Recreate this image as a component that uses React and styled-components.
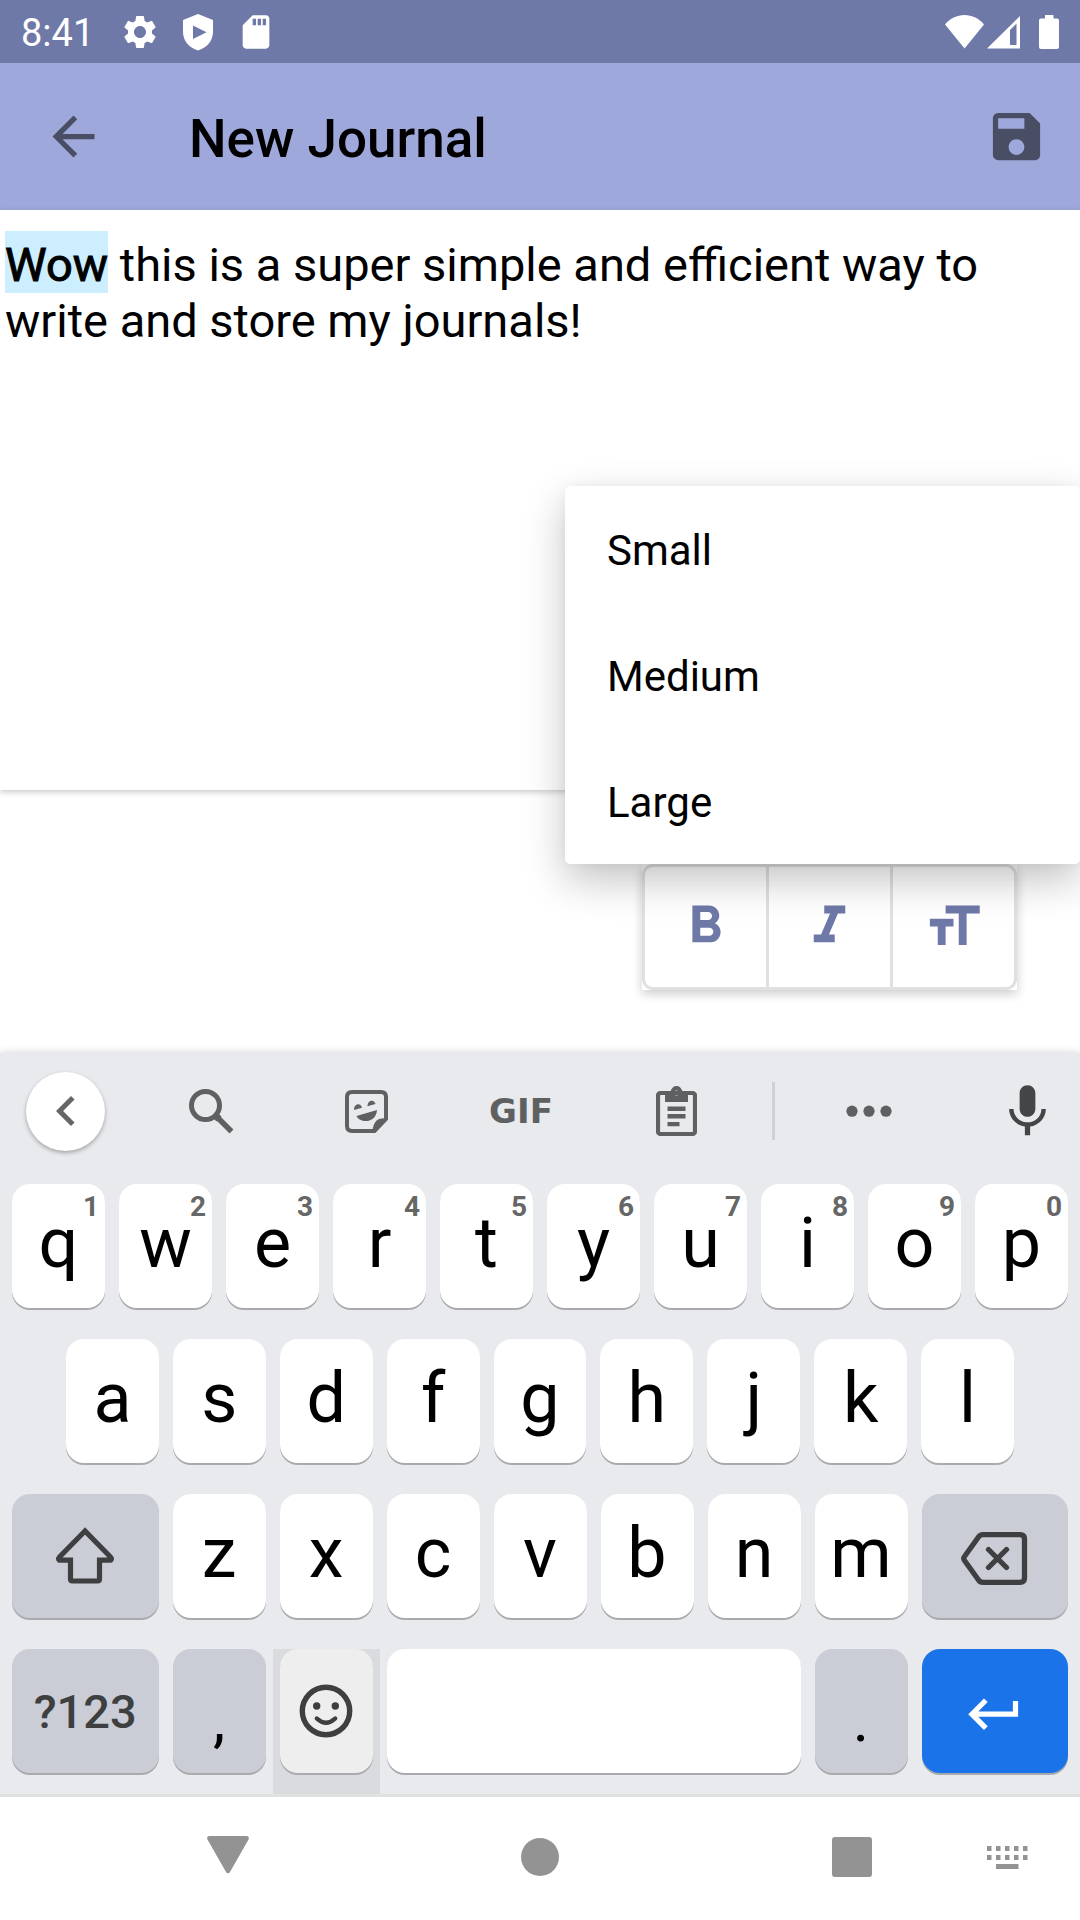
import React from "react";
import styled, { createGlobalStyle } from "styled-components";
import {
  MdArrowBack,
  MdChevronLeft,
  MdFormatBold,
  MdFormatItalic,
  MdFormatSize,
  MdMic,
  MdSave,
  MdSdCard,
  MdSettings,
} from "react-icons/md";

const GlobalStyle = createGlobalStyle`
  *, *::before, *::after { box-sizing: border-box; }
  body { margin: 0; background: #fff; overflow-x: hidden; }
  button {
    margin: 0;
    padding: 0;
    border: 0;
    background: none;
    color: inherit;
    font: inherit;
    cursor: pointer;
  }
  svg { display: block; flex: none; }
`;

const Screen = styled.div`
  display: flex;
  flex-direction: column;
  min-height: 100vh;
  overflow: hidden;
  background: #fff;
  color: #000;
  font-family: Roboto, "Liberation Sans", sans-serif;
`;

/* ---------- Status bar ---------- */

const StatusBar = styled.div`
  display: flex;
  align-items: center;
  justify-content: space-between;
  height: 63px;
  padding: 0 21px;
  background: #6f79a8;
  color: #fff;
`;

const StatusGroup = styled.div`
  display: flex;
  align-items: center;
  gap: ${(p) => p.$gap}px;
`;

const Clock = styled.time`
  margin-right: 8px;
  padding-top: 2px;
  font-size: 38px;
  line-height: 44px;
`;

/* ---------- App bar ---------- */

const AppBar = styled.header`
  display: flex;
  align-items: center;
  height: 147px;
  padding: 0 32px 0 42px;
  background: #9fa8da;
`;

const BarButton = styled.button`
  color: #494e65;
`;

const Title = styled.h1`
  flex: 1;
  margin: 0;
  padding: 4px 0 0 84px;
  font-size: 53px;
  font-weight: 500;
  line-height: 62px;
`;

/* ---------- Editor ---------- */

const Editor = styled.div`
  flex: 1;
  padding: 27px 5px;
  background: #fff;
  box-shadow: 0 2px 6px rgba(0, 0, 0, 0.22);
  font-size: 47px;
  line-height: 56px;
  outline: none;
`;

const Selection = styled.mark`
  padding: 6px 0 1px;
  background: #cceeff;
  color: inherit;
  -webkit-text-stroke: 1px currentColor;
`;

const FormatArea = styled.div`
  display: flex;
  justify-content: flex-end;
  padding: 74px 63px 63px;
`;

const FormatAnchor = styled.div`
  position: relative;
  background: #fff;
  box-shadow: 0 4px 10px rgba(0, 0, 0, 0.2);
`;

const ToggleGroup = styled.div`
  display: flex;
  border: 3px solid #e0e0e0;
  border-radius: 11px;
`;

const Toggle = styled.button`
  display: flex;
  align-items: center;
  justify-content: center;
  width: 121px;
  height: 120px;
  padding-bottom: 2px;
  color: #6f79a8;

  & + & {
    width: 124px;
    border-left: 3px solid #e0e0e0;
  }
`;

const SizeMenu = styled.div`
  position: absolute;
  right: -63px;
  bottom: 100%;
  width: 515px;
  border-radius: 5px;
  background: #fff;
  box-shadow: 0 16px 42px rgba(0, 0, 0, 0.24), 0 0 12px rgba(0, 0, 0, 0.04);
`;

const SizeOption = styled.button`
  display: block;
  width: 100%;
  height: 126px;
  padding: 4px 42px 0;
  font-size: 42px;
  line-height: 50px;
  text-align: left;
`;

/* ---------- Keyboard ---------- */

const Keyboard = styled.section`
  position: relative;
  z-index: 0;
  padding-bottom: 21px;
  border-bottom: 3px solid #e0e2e1;
  background: #e8eaed;
  box-shadow: 0 0 9px rgba(0, 0, 0, 0.18);
`;

const KeyboardTools = styled.div`
  display: flex;
  align-items: center;
  justify-content: space-between;
  height: 116px;
  margin-bottom: 15px;
  padding: 0 21px 0 26px;
  color: #5f6062;
`;

const ToolGroup = styled.div`
  display: flex;
  align-items: center;
`;

const CollapseButton = styled.button`
  display: flex;
  align-items: center;
  justify-content: center;
  width: 79px;
  height: 79px;
  margin-right: 74px;
  border-radius: 50%;
  background: #fff;
  box-shadow: 0 2px 4px rgba(0, 0, 0, 0.3);
  color: #666;
`;

const Tool = styled.button`
  display: flex;
  align-items: center;
  justify-content: center;
  width: 64px;
  height: 64px;
  color: ${(p) => (p.$dark ? "#444547" : "inherit")};

  & + & {
    margin-left: 91px;
  }
`;

const GifLabel = styled.span`
  font-family: "DejaVu Sans", sans-serif;
  font-size: 34px;
  font-weight: 700;
  line-height: 40px;
`;

const Divider = styled.span`
  width: 3px;
  height: 58px;
  margin: 0 62px 0 64px;
  background: #d0d1d4;
`;

const Rows = styled.div`
  display: flex;
  flex-direction: column;
  gap: 31px;
`;

const Row = styled.div`
  display: flex;
  gap: 14px;
  padding: 0 ${(p) => p.$inset || 12}px;
`;

const keyFill = { letter: "#fff", soft: "#cbcdd6", pressed: "#eee", enter: "#1a73e8" };

const Key = styled.button`
  position: relative;
  display: flex;
  align-items: center;
  justify-content: center;
  flex: ${(p) => p.$span || 1} 1 ${(p) => ((p.$span || 1) - 1) * 14}px;
  min-width: 0;
  height: 124px;
  padding-bottom: ${(p) => (p.$kind ? 0 : 6)}px;
  border-radius: 18px;
  background: ${(p) => keyFill[p.$kind || "letter"]};
  box-shadow: 0 2px 0 #a9aaad;
  color: ${(p) => (p.$kind === "enter" ? "#fff" : p.$kind ? "#3e3f41" : "#000")};
  font-size: 70px;
  line-height: 82px;
`;

const PressedKey = styled(Key)`
  &::before {
    content: "";
    position: absolute;
    z-index: -1;
    inset: 0 -7px -21px;
    background: #dadbdf;
  }
`;

const PunctuationKey = styled(Key)`
  padding-top: 18px;
  color: #000;
  font-size: 62px;
`;

const SymbolsKey = styled(Key)`
  padding-top: 2px;
  font-size: 47px;
  font-weight: 500;
`;

const Hint = styled.span`
  position: absolute;
  top: 6px;
  right: 6px;
  color: #666;
  font-size: 28px;
  font-weight: 700;
  line-height: 34px;
`;

/* ---------- Navigation bar ---------- */

const NavBar = styled.nav`
  position: relative;
  z-index: 1;
  display: flex;
  justify-content: space-between;
  height: 123px;
  padding-left: 150px;
  background: #fff;
  color: #939393;
`;

const NavButton = styled.button`
  display: flex;
  align-items: center;
  justify-content: center;
  width: 156px;
  padding-bottom: 3px;
`;

const NavPair = styled.div`
  display: flex;
`;

const ImeButton = styled(NavButton)`
  width: 150px;
`;

/* ---------- Drawings ---------- */

const ShieldPlayIcon = () => (
  <svg width="40" height="40" viewBox="0 0 40 40" fill="currentColor">
    <path
      fillRule="evenodd"
      d="M20 2 35 8V20C35 29 28.500 36 20 38.500C11.500 36 5 29 5 20V8ZM15 13.500V27L28.500 20.200Z"
    />
  </svg>
);

const WifiIcon = () => (
  <svg width="39" height="34" viewBox="0 0 39 34" fill="currentColor">
    <path d="M0 9.500C5 3.500 12 0 19.500 0S34 3.500 39 9.500L19.500 33.500Z" />
  </svg>
);

const SignalIcon = () => (
  <svg width="33" height="34" viewBox="0 0 33 34" fill="currentColor">
    <path fillRule="evenodd" d="M33 1V33.500H0ZM29.500 8.500 23 15V30H29.500Z" />
  </svg>
);

const BatteryIcon = () => (
  <svg width="20" height="34" viewBox="0 0 20 34" fill="currentColor">
    <path d="M6 0h8.500v3.500H18a2 2 0 0 1 2 2V32a2 2 0 0 1-2 2H2a2 2 0 0 1-2-2V5.500a2 2 0 0 1 2-2h4z" />
  </svg>
);

const SearchIcon = () => (
  <svg width="46" height="46" viewBox="0 0 46 46" fill="none" stroke="currentColor" strokeWidth="5">
    <circle cx="17.500" cy="17.500" r="14" />
    <path d="M28 28 43.500 43.500" strokeWidth="5.500" />
    <path d="M27 27 31 31" strokeWidth="7" />
  </svg>
);

const StickerIcon = () => (
  <svg width="43" height="43" viewBox="0 0 43 43" fill="currentColor">
    <path
      fill="none"
      stroke="currentColor"
      strokeWidth="4"
      d="M7 2H36Q41 2 41 7V29L29.500 41H7Q2 41 2 36V7Q2 2 7 2Z"
    />
    <path d="M41 28.500V31L31 41H27.500C28 33 32 28.500 37 28.500Z" />
    <path d="M9 20c-.3-6 6.500-8 8-2.200z" />
    <path d="M22.500 16.300c-.3-6 6.500-8 8-2.200z" />
    <path d="M11.500 26 32 20C31 33.500 15 33.500 11.500 26Z" />
  </svg>
);

const ClipboardIcon = () => (
  <svg width="41" height="50" viewBox="0 0 41 50" fill="currentColor">
    <rect x="2" y="7" width="37" height="41" rx="2.500" fill="none" stroke="currentColor" strokeWidth="4.200" />
    <path
      fillRule="evenodd"
      d="M9 5.500h5.500C15.500 2 17.500 0 20.500 0S25.500 2 26.500 5.500H32v10.500H9ZM20.500 4.500a2.500 2.500 0 1 0 0 5a2.500 2.500 0 1 0 0-5Z"
    />
    <path d="M11.500 20.500H29.500V25H11.500ZM11.500 28H29.500V32.500H11.500ZM11.500 36H23.500V40.300H11.500Z" />
  </svg>
);

const DotsIcon = () => (
  <svg width="46" height="12" viewBox="0 0 46 12" fill="currentColor">
    <circle cx="6" cy="6.200" r="5.600" />
    <circle cx="23" cy="6.200" r="5.600" />
    <circle cx="40" cy="6.200" r="5.600" />
  </svg>
);

const ShiftIcon = () => (
  <svg width="60" height="60" viewBox="0 0 60 60" fill="none" stroke="currentColor" strokeWidth="5.200">
    <path d="M30 5 4.500 31C3 32.500 3.500 34.200 5.500 34.200H15.500V53q0 2 2 2h25q2 0 2-2V34.200H54.500C56.500 34.200 57 32.500 55.500 31Z" />
  </svg>
);

const BackspaceIcon = () => (
  <svg
    width="72"
    height="60"
    viewBox="0 0 72 60"
    fill="none"
    stroke="currentColor"
    strokeWidth="5.300"
    strokeLinejoin="round"
    strokeLinecap="round"
  >
    <path d="M24 8.700H61Q65.500 8.700 65.500 13V52Q65.500 56.300 61 56.300H24Q21 56.300 19.500 54L5.500 34.500Q4 32.500 5.500 30.500L19.500 11Q21 8.700 24 8.700Z" />
    <path d="M29.500 23.500 47.500 41.500M47.500 23.500 29.500 41.500" />
  </svg>
);

const SmileyIcon = () => (
  <svg width="54" height="54" viewBox="0 0 54 54" fill="none" stroke="currentColor">
    <circle cx="27" cy="27" r="23.700" strokeWidth="5.400" />
    <circle cx="17.700" cy="22" r="3.700" fill="currentColor" stroke="none" />
    <circle cx="36.300" cy="22" r="3.700" fill="currentColor" stroke="none" />
    <path d="M17.800 34.500Q27 43 36.200 34.500" strokeWidth="4.400" strokeLinecap="round" />
  </svg>
);

const EnterIcon = () => (
  <svg width="63" height="63" viewBox="0 -1 24 24" fill="currentColor">
    <path d="M19 7v4H5.830l3.580-3.590L8 6l-6 6 6 6 1.410-1.410L5.830 13H21V7z" />
  </svg>
);

const BackTriangleIcon = () => (
  <svg width="42" height="44" viewBox="0 0 42 44" fill="currentColor">
    <path d="M2.500 1h37c2 0 3 1.800 2 3.500L23 37c-1 1.800-3 1.800-4 0L.5 4.500C-.5 2.800.5 1 2.500 1z" />
  </svg>
);

const HomeCircleIcon = () => (
  <svg width="40" height="40" viewBox="0 0 40 40" fill="currentColor">
    <circle cx="20" cy="20" r="19" />
  </svg>
);

const RecentsIcon = () => (
  <svg width="40" height="40" viewBox="0 0 40 40" fill="currentColor">
    <rect width="40" height="40" rx="3" />
  </svg>
);

const KeyboardSwitchIcon = () => (
  <svg width="46" height="24" viewBox="0 0 46 24" fill="currentColor">
    {[0, 9, 18, 27, 36].map((x) => (
      <React.Fragment key={x}>
        <rect x={x + 5} y="1" width="4.500" height="5" />
        <rect x={x + 5} y="10" width="4.500" height="5" />
      </React.Fragment>
    ))}
    <rect x="14" y="19" width="22.500" height="5" />
  </svg>
);

const topRow = ["q1", "w2", "e3", "r4", "t5", "y6", "u7", "i8", "o9", "p0"];

export default function App() {
  return (
    <>
      <GlobalStyle />
      <Screen>
        <StatusBar>
          <StatusGroup $gap={18}>
            <Clock>8:41</Clock>
            <MdSettings size={40} />
            <ShieldPlayIcon />
            <MdSdCard size={40} />
          </StatusGroup>
          <StatusGroup $gap={19}>
            <StatusGroup $gap={3}>
              <WifiIcon />
              <SignalIcon />
            </StatusGroup>
            <BatteryIcon />
          </StatusGroup>
        </StatusBar>

        <AppBar>
          <BarButton aria-label="Back">
            <MdArrowBack size={63} />
          </BarButton>
          <Title>New Journal</Title>
          <BarButton aria-label="Save">
            <MdSave size={63} />
          </BarButton>
        </AppBar>

        <Editor
          role="textbox"
          aria-multiline="true"
          aria-label="Journal entry"
          contentEditable
          suppressContentEditableWarning
          spellCheck={false}
        >
          <Selection>Wow</Selection> this is a super simple and efficient way to write and store my journals!
        </Editor>

        <FormatArea>
          <FormatAnchor>
            <ToggleGroup role="toolbar" aria-label="Text format">
              <Toggle aria-label="Bold">
                <MdFormatBold size={63} />
              </Toggle>
              <Toggle aria-label="Italic">
                <MdFormatItalic size={63} />
              </Toggle>
              <Toggle aria-label="Text size" aria-haspopup="menu" aria-expanded="true">
                <MdFormatSize size={63} />
              </Toggle>
            </ToggleGroup>
            <SizeMenu role="menu" aria-label="Text size">
              {["Small", "Medium", "Large"].map((size) => (
                <SizeOption key={size} role="menuitem">
                  {size}
                </SizeOption>
              ))}
            </SizeMenu>
          </FormatAnchor>
        </FormatArea>

        <Keyboard aria-label="Keyboard">
          <KeyboardTools>
            <ToolGroup>
              <CollapseButton aria-label="Collapse tools">
                <MdChevronLeft size={60} />
              </CollapseButton>
              <Tool aria-label="Search">
                <SearchIcon />
              </Tool>
              <Tool aria-label="Stickers">
                <StickerIcon />
              </Tool>
              <Tool>
                <GifLabel>GIF</GifLabel>
              </Tool>
              <Tool aria-label="Clipboard">
                <ClipboardIcon />
              </Tool>
              <Divider />
              <Tool aria-label="More">
                <DotsIcon />
              </Tool>
            </ToolGroup>
            <Tool $dark aria-label="Voice input">
              <MdMic size={63} />
            </Tool>
          </KeyboardTools>

          <Rows>
            <Row>
              {topRow.map(([letter, digit]) => (
                <Key key={letter}>
                  {letter}
                  <Hint>{digit}</Hint>
                </Key>
              ))}
            </Row>
            <Row $inset={66}>
              {[..."asdfghjkl"].map((letter) => (
                <Key key={letter}>{letter}</Key>
              ))}
            </Row>
            <Row>
              <Key $kind="soft" $span={1.5} aria-label="Shift">
                <ShiftIcon />
              </Key>
              {[..."zxcvbnm"].map((letter) => (
                <Key key={letter}>{letter}</Key>
              ))}
              <Key $kind="soft" $span={1.5} aria-label="Backspace">
                <BackspaceIcon />
              </Key>
            </Row>
            <Row>
              <SymbolsKey $kind="soft" $span={1.5}>
                ?123
              </SymbolsKey>
              <PunctuationKey $kind="soft">,</PunctuationKey>
              <PressedKey $kind="pressed" aria-label="Emoji">
                <SmileyIcon />
              </PressedKey>
              <Key $span={4} aria-label="Space" />
              <PunctuationKey $kind="soft">.</PunctuationKey>
              <Key $kind="enter" $span={1.5} aria-label="Enter">
                <EnterIcon />
              </Key>
            </Row>
          </Rows>
        </Keyboard>

        <NavBar aria-label="System navigation">
          <NavButton aria-label="Back">
            <BackTriangleIcon />
          </NavButton>
          <NavButton aria-label="Home">
            <HomeCircleIcon />
          </NavButton>
          <NavPair>
            <NavButton aria-label="Recents">
              <RecentsIcon />
            </NavButton>
            <ImeButton aria-label="Switch keyboard">
              <KeyboardSwitchIcon />
            </ImeButton>
          </NavPair>
        </NavBar>
      </Screen>
    </>
  );
}
